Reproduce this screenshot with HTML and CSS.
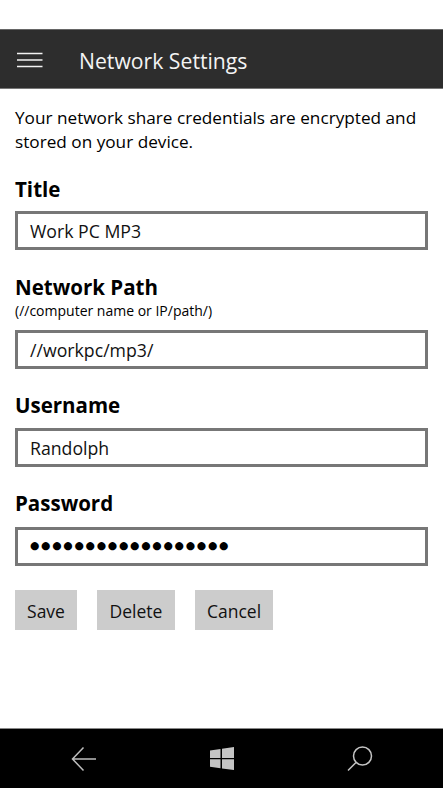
FILE: index.html
```html
<!DOCTYPE html>
<html lang="en">
<head>
<meta charset="utf-8">
<title>Network Settings</title>
<link rel="stylesheet" href="styles.css">
</head>
<body>
<div class="status"></div>
<header class="bar">
  <svg class="menu" width="26" height="16" viewBox="0 0 26 16"><path d="M0 1.500H25.500M0 8H25.500M0 14.500H25.500" stroke="#f2f2f2" stroke-width="1.500" fill="none"/></svg>
  <h1 class="bar-title">Network Settings</h1>
</header>
<main class="content">
  <p class="intro">Your network share credentials are encrypted and stored on your device.</p>
  <section class="field field-title">
    <h2 class="label">Title</h2>
    <div class="input">Work PC MP3</div>
  </section>
  <section class="field field-path">
    <h2 class="label">Network Path</h2>
    <div class="hint">(//computer name or IP/path/)</div>
    <div class="input">//workpc/mp3/</div>
  </section>
  <section class="field field-user">
    <h2 class="label">Username</h2>
    <div class="input">Randolph</div>
  </section>
  <section class="field field-pass">
    <h2 class="label">Password</h2>
    <div class="input dots"><span class="dot-text">●●●●●●●●●●●●●●●●●●</span></div>
  </section>
  <div class="actions">
    <div class="btn btn-save">Save</div>
    <div class="btn btn-delete">Delete</div>
    <div class="btn btn-cancel">Cancel</div>
  </div>
</main>
<nav class="nav">
  <svg class="nav-icon" width="26" height="26" viewBox="0 0 26 26"><path d="M25 13H2M12.500 1.500L1.500 13L12.500 24.500" stroke="#bdbdbd" stroke-width="1.500" fill="none"/></svg>
  <svg class="nav-icon" width="24" height="23" viewBox="0 0 24 23"><path d="M0 3.400L10.500 1.900V11H0ZM12 1.700L24 0V11H12ZM0 12.300H10.500V21.200L0 19.800ZM12 12.300H24V23L12 21.400Z" fill="#c4c4c4"/></svg>
  <svg class="nav-icon" width="26" height="26" viewBox="0 0 26 26"><circle cx="15.500" cy="10" r="9" stroke="#c4c4c4" stroke-width="1.500" fill="none"/><path d="M9 16.500L1 24.500" stroke="#c4c4c4" stroke-width="1.500" fill="none"/></svg>
</nav>
</body>
</html>
```
FILE: styles.css
```css
* { box-sizing: border-box; }
html, body { margin: 0; padding: 0; }
body {
  width: 443px;
  height: 788px;
  overflow: hidden;
  display: flex;
  flex-direction: column;
  background: #fff;
  color: #000;
  font-family: "Open Sans", "Noto Sans", sans-serif;
}
.status { height: 29px; flex: none; }
.bar {
  height: 60px;
  flex: none;
  background: #2d2d2d;
  border-top: 1px solid #666;
  border-bottom: 1px solid #777;
  display: flex;
  align-items: center;
  padding: 3px 0 0 17px;
  gap: 36px;
}
.menu { flex: none; margin-top: -1px; }
.bar-title {
  margin: 0;
  font-size: 21.200px;
  font-weight: 400;
  color: #f4f4f4;
}
.content { flex: 1; padding: 17px 15px 0; }
.intro {
  margin: 0;
  font-size: 17.200px;
  line-height: 24px;
  width: 410px;
}
.field { display: flex; flex-direction: column; }
.field-title { margin-top: 21px; }
.field-path { margin-top: 24px; }
.field-user { margin-top: 22px; }
.field-pass { margin-top: 22px; }
.label {
  margin: 0;
  font-size: 20.500px;
  line-height: 28px;
  font-weight: 700;
}
.field-title .label { margin-bottom: 8px; }
.field-path .label { line-height: 26px; }
.field-user .label { margin-bottom: 9px; }
.field-pass .label { margin-bottom: 10px; }
.hint { font-size: 14px; line-height: 16px; margin: 3px 0 11px; }
.input {
  width: 413px;
  height: 39px;
  border: 3px solid #777;
  padding: 0 12px;
  font-size: 17.700px;
  line-height: 35px;
  color: #111;
  white-space: nowrap;
  overflow: hidden;
}
.dots { display: flex; align-items: center; }
.dot-text {
  font-size: 10.800px;
  line-height: 1;
  letter-spacing: 1.700px;
  font-family: "DejaVu Sans", sans-serif;
  color: #000;
}
.actions { display: flex; gap: 20px; margin-top: 24px; }
.btn {
  height: 40px;
  background: #cccccc;
  font-size: 17.500px;
  line-height: 42px;
  text-align: center;
  color: #111;
}
.btn-save { width: 62px; }
.btn-delete { width: 78px; }
.btn-cancel { width: 78px; }
.nav {
  height: 60px;
  flex: none;
  background: #000;
  border-top: 1px solid #888;
  display: grid;
  grid-template-columns: 26px 1fr 26px;
  justify-items: center;
  align-items: center;
  padding: 0 70px 0 71px;
}
.nav-icon { display: block; }
```
